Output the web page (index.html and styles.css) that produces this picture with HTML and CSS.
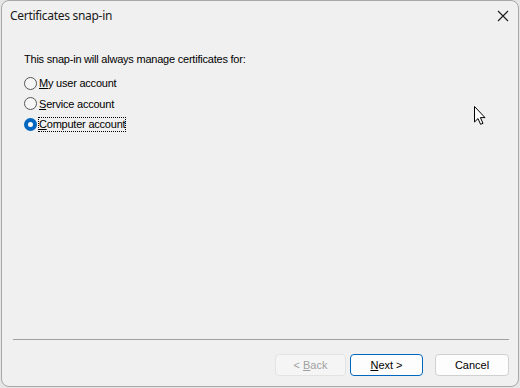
FILE: index.html
```html
<!DOCTYPE html>
<html>
<head>
<meta charset="utf-8">
<link rel="stylesheet" href="styles.css">
</head>
<body>
<div class="window">
  <div class="titlebar">
    <span class="title">Certificates snap-in</span>
    <svg class="close" width="12" height="12" viewBox="0 0 12 12"><path d="M1 1 L11 11 M11 1 L1 11" stroke="#1a1a1a" stroke-width="1.1" fill="none"/></svg>
  </div>
  <div class="content">
    <p class="intro">This snap-in will always manage certificates for:</p>
    <div class="options">
      <label class="opt"><span class="radio"></span><span><u>M</u>y user account</span></label>
      <label class="opt"><span class="radio"></span><span><u>S</u>ervice account</span></label>
      <label class="opt"><span class="radio checked"></span><span class="focus"><u>C</u>omputer account</span></label>
    </div>
  </div>
  <div class="footer">
    <div class="sep"></div>
    <div class="buttons">
      <button class="btn disabled">&lt; <u>B</u>ack</button>
      <button class="btn primary"><u>N</u>ext &gt;</button>
      <button class="btn cancel">Cancel</button>
    </div>
  </div>
  <svg class="cursor" width="14" height="21" viewBox="0 0 14 21"><path d="M1.5 1.5 L1.5 17 L5 13.6 L7.6 19.3 L10 18.3 L7.4 12.6 L12 12.6 Z" fill="#fff" stroke="#000" stroke-width="1" stroke-linejoin="miter"/></svg>
</div>
</body>
</html>
```

FILE: styles.css
```css
html, body {
  margin: 0;
  padding: 0;
}
body {
  background: #e6e6e6;
  width: 520px;
  height: 388px;
  overflow: hidden;
}
.window {
  position: relative;
  box-sizing: border-box;
  margin-left: 1px;
  width: 518px;
  height: 387px;
  background: #f0f0f0;
  border: 1px solid #a8a8a8;
  border-radius: 8px;
  display: flex;
  flex-direction: column;
  font-family: "Liberation Sans", Arial, sans-serif;
  font-size: 11px;
  color: #000;
}
.titlebar {
  height: 29px;
  display: flex;
  align-items: center;
  justify-content: space-between;
  padding: 0 8px 0 8px;
}
.title {
  font-family: "Noto Sans", "Open Sans", sans-serif;
  font-size: 12px;
  color: #1a1a1a;
  letter-spacing: -0.3px;
}
.close {
  margin-right: 1px;
}
.content {
  flex: 1;
  padding: 23px 0 0 21px;
  letter-spacing: -0.22px;
}
.intro {
  margin: 0 0 10px 1px;
  line-height: 13px;
}
.options {
  display: flex;
  flex-direction: column;
  gap: 6.5px;
}
.opt {
  display: flex;
  align-items: center;
  gap: 2px;
  height: 14px;
}
.radio {
  box-sizing: border-box;
  width: 13px;
  height: 13px;
  border-radius: 50%;
  border: 1px solid #555;
  background: #f6f6f6;
  margin-left: 1px;
}
.radio.checked {
  border: 4px solid #0067c0;
  background: #fff;
}
.focus {
  outline: 1px dotted #000;
  outline-offset: 0;
  line-height: 13px;
}
.footer {
  padding: 0 9px 10px 11px;
}
.sep {
  height: 1px;
  background: #a0a0a0;
  margin-bottom: 14px;
}
.buttons {
  display: flex;
  justify-content: flex-end;
  gap: 4px;
}
.btn {
  box-sizing: border-box;
  width: 74px;
  height: 22px;
  font-family: "Liberation Sans", Arial, sans-serif;
  font-size: 11px;
  border-radius: 4px;
  border: 1px solid #d0d0d0;
  background: #fdfdfd;
  color: #000;
  padding: 0;
}
.btn.disabled {
  width: 71px;
  color: #a0a0a0;
  background: #f5f5f5;
  border-color: #e3e3e3;
}
.btn.primary {
  width: 73px;
  border-color: #0067c0;
  margin-right: 8px;
}
.cursor {
  position: absolute;
  left: 471px;
  top: 104px;
}
```
